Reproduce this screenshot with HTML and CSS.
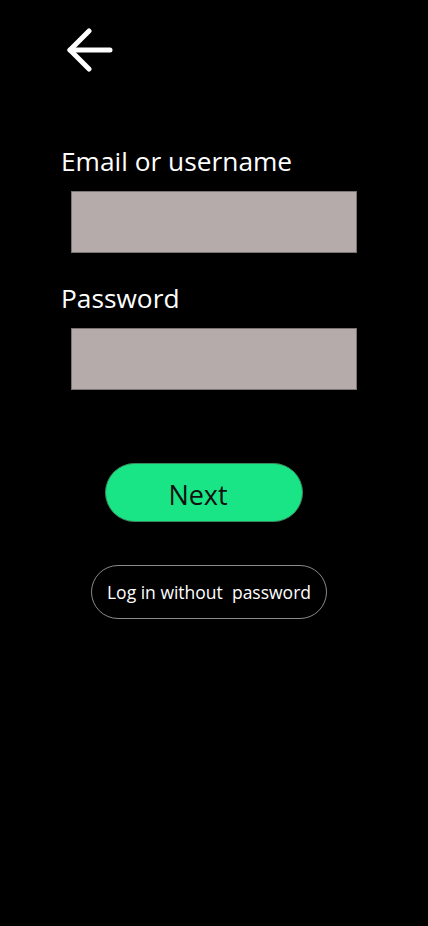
FILE: index.html
```html
<!DOCTYPE html>
<html lang="en">
<head>
<meta charset="utf-8">
<title>Log in</title>
<link rel="stylesheet" href="styles.css">
</head>
<body>
<main class="screen">
  <button class="back" aria-label="Back">
    <svg width="48" height="48" viewBox="0 0 48 48" fill="none" stroke="#fff" stroke-width="5" stroke-linecap="round" stroke-linejoin="round">
      <path d="M44 22H4"/>
      <path d="M23 3L4 22L23 41"/>
    </svg>
  </button>
  <form class="form">
    <label class="label" for="email">Email or username</label>
    <input class="field" id="email" type="text">
    <label class="label label-pw" for="pw">Password</label>
    <input class="field" id="pw" type="password">
    <div class="actions">
      <button type="button" class="next">Next</button>
      <button type="button" class="nopw">Log in without&nbsp; password</button>
    </div>
  </form>
</main>
</body>
</html>
```
FILE: styles.css
```css
html, body {
  margin: 0;
  padding: 0;
  background: #000;
}
body {
  font-family: "Open Sans", "Noto Sans", sans-serif;
  color: #fff;
  width: 428px;
  height: 926px;
}
.screen {
  display: flex;
  flex-direction: column;
  padding: 28px 0 0 66px;
}
.back {
  background: none;
  border: 0;
  padding: 0;
  width: 48px;
  height: 48px;
  cursor: pointer;
  display: block;
}
.back svg { display: block; }
.form {
  display: flex;
  flex-direction: column;
  margin-top: 68px;
  margin-left: -5px;
}
.label {
  font-size: 26.3px;
  line-height: 34px;
  color: #fff;
  display: block;
}
.label-pw { margin-top: 28px; }
.field {
  box-sizing: border-box;
  width: 286px;
  height: 62px;
  margin: 13px 0 0 10px;
  background: #b5abab;
  border: 1px solid #7a7474;
  border-radius: 0;
  padding: 0;
  outline: none;
}
.actions {
  display: flex;
  flex-direction: column;
  align-items: flex-start;
  margin-top: 73px;
}
.next {
  box-sizing: border-box;
  width: 198px;
  height: 59px;
  margin-left: 44px;
  background: #1ae586;
  border: 1px solid #3a8a5e;
  border-radius: 30px;
  font-family: inherit;
  font-size: 27px;
  color: #111;
  padding: 3px 12px 0 0;
}
.nopw {
  box-sizing: border-box;
  width: 236px;
  height: 54px;
  margin: 43px 0 0 30px;
  background: #000;
  border: 1px solid #8a8a8a;
  border-radius: 27px;
  font-family: inherit;
  font-size: 17.5px;
  color: #fff;
  padding: 0;
  white-space: nowrap;
}
```
